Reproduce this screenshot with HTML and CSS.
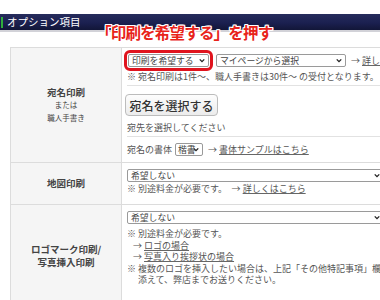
FILE: index.html
```html
<!DOCTYPE html>
<html lang="ja">
<head>
<meta charset="utf-8">
<link rel="stylesheet" href="styles.css">
</head>
<body>
<div class="page">
  <div class="hdr"><span class="mark"></span><span class="ttl">オプション項目</span></div>
  <div class="callout">「印刷を希望する」を押す</div>
  <div class="tbl">
    <div class="lbl row1"><b>宛名印刷</b><small>または</small><small>職人手書き</small></div>
    <div class="cell row1">
      <div class="sec s1">
        <div class="line">
          <span class="sel hl w1">印刷を希望する<svg viewBox="0 0 8 6" class="chev"><path d="M1 1.5 L4 4.5 L7 1.5" /></svg></span>
          <span class="sel w2">マイページから選択<svg viewBox="0 0 8 6" class="chev"><path d="M1 1.5 L4 4.5 L7 1.5" /></svg></span>
          <span class="arr">→ <u>詳しくはこちら</u></span>
        </div>
        <p class="txt t1">※ 宛名印刷は1件〜、職人手書きは30件〜 の受付となります。</p>
      </div>
      <div class="sec s2">
        <button class="btn">宛名を選択する</button>
        <p class="txt t2">宛先を選択してください</p>
      </div>
      <div class="sec s3 line">
        <span class="txt">宛名の書体</span>
        <span class="sel w3">楷書<svg viewBox="0 0 8 6" class="chev"><path d="M1 1.5 L4 4.5 L7 1.5" /></svg></span>
        <span class="arr">→ <u>書体サンプルはこちら</u></span>
      </div>
    </div>

    <div class="lbl row2"><b>地図印刷</b></div>
    <div class="cell row2 pad">
      <span class="sel wide">希望しない<svg viewBox="0 0 8 6" class="chev"><path d="M1 1.5 L4 4.5 L7 1.5" /></svg></span>
      <p class="txt lh12">※ 別途料金が必要です。　→ <u>詳しくはこちら</u></p>
    </div>

    <div class="lbl row3"><b>ロゴマーク印刷/</b><b>写真挿入印刷</b></div>
    <div class="cell row3 pad">
      <span class="sel wide">希望しない<svg viewBox="0 0 8 6" class="chev"><path d="M1 1.5 L4 4.5 L7 1.5" /></svg></span>
      <div class="notes">
        <p class="txt">※ 別途料金が必要です。</p>
        <p class="txt ind">→ <u>ロゴの場合</u></p>
        <p class="txt ind">→ <u>写真入り挨拶状の場合</u></p>
        <p class="txt hang">※ 複数のロゴを挿入したい場合は、上記「その他特記事項」欄に<br>添えて、弊店までお送りください。</p>
      </div>
    </div>
  </div>
</div>
</body>
</html>
```
FILE: styles.css
```css
html, body {
  margin: 0;
  padding: 0;
  background: #fff;
  overflow: hidden;
}
body {
  font-family: "Noto Sans CJK JP", "Noto Sans", sans-serif;
  color: #555;
}
.page {
  position: relative;
  width: 380px;
  height: 300px;
  padding-top: 14px;
  box-sizing: border-box;
  overflow: hidden;
}
.hdr {
  height: 16px;
  display: flex;
  align-items: center;
  gap: 4px;
  background: linear-gradient(#262c5c, #1b2050 55%, #121638);
  border-bottom: 2px solid #d2d2d8;
}
.mark {
  width: 2px;
  height: 11px;
  margin-left: 1px;
  background: #2fae3c;
}
.ttl {
  color: #fff;
  font-size: 10.5px;
  line-height: 1;
}
.callout {
  position: absolute;
  left: 96px;
  top: 22px;
  font-size: 15.5px;
  font-weight: 700;
  letter-spacing: -0.8px;
  line-height: 20px;
  color: #e8231a;
  text-shadow: 1px 0 0 #fff, -1px 0 0 #fff, 0 1px 0 #fff, 0 -1px 0 #fff,
    1px 1px 0 #fff, -1px -1px 0 #fff, 1px -1px 0 #fff, -1px 1px 0 #fff;
  z-index: 2;
}
.tbl {
  margin: 15px 0 0 10px;
  width: 400px;
  display: grid;
  grid-template-columns: 111px 1fr;
  grid-template-rows: auto auto 1fr;
  border-top: 1px solid #dcdcdc;
  border-left: 1px solid #dcdcdc;
  height: 260px;
}
.lbl {
  background: #f5f5f5;
  border-right: 1px solid #dcdcdc;
  border-bottom: 1px solid #dcdcdc;
  display: flex;
  flex-direction: column;
  align-items: center;
  justify-content: center;
  color: #444;
}
.lbl b {
  font-size: 9.5px;
  font-weight: 700;
  line-height: 13px;
}
.lbl small {
  font-size: 7.5px;
  line-height: 13px;
}
.row1.lbl b { line-height: 12px; }
.cell {
  border-bottom: 1px solid #dcdcdc;
  padding-left: 5px;
  font-size: 9px;
}
.pad {
  padding-top: 6px;
}
.row2.cell { padding-bottom: 9px; }
p { margin: 0; }
.txt {
  font-size: 9px;
  line-height: 10px;
  color: #555;
  white-space: nowrap;
}
u { text-decoration-color: #666; }
.line {
  display: flex;
  align-items: center;
  gap: 3px;
}
.sec {
  border-bottom: 1px solid #e2e2e2;
}
.s1 { padding: 6px 0 3px; }
.s2 { padding: 8px 0 3px; }
.s3 { border-bottom: none; height: 25px; box-sizing: border-box; }
.t1 { margin-top: 5px; }
.t2 { margin-top: 7px; }
.sel {
  position: relative;
  display: inline-flex;
  align-items: center;
  height: 13px;
  box-sizing: border-box;
  border: 1px solid #9a9a9a;
  border-radius: 2px;
  padding: 0 3px;
  font-size: 8.8px;
  color: #444;
  background: #fff;
  white-space: nowrap;
}
.chev {
  position: absolute;
  right: 3px;
  top: 3px;
  width: 6px;
  height: 5px;
  fill: none;
  stroke: #222;
  stroke-width: 1.8;
}
.hl {
  outline: 3px solid #e0141e;
  outline-offset: 1px;
  margin-left: 1px;
}
.w1 { width: 81px; }
.w2 { width: 130px; margin-left: 4px; }
.w3 { width: 28px; padding: 0 2px; }
.arr {
  font-size: 9px;
  color: #555;
  margin-left: 2px;
  white-space: nowrap;
}
.btn {
  display: block;
  margin-left: -2px;
  width: 93px;
  height: 22px;
  padding: 0;
  border: 1px solid #bcbcbc;
  border-radius: 4px;
  background: linear-gradient(#fdfdfd, #ececec);
  font-family: inherit;
  font-size: 12px;
  font-weight: 500;
  color: #333;
}
.wide {
  width: 257px;
  display: flex;
}
.lh12 {
  line-height: 12px;
  margin-top: 1px;
}
.notes { margin-top: 4px; }
.notes .txt { line-height: 11.5px; }
.ind { padding-left: 6px; }
.hang {
  margin-top: 0;
  padding-left: 11px;
  text-indent: -11px;
}
```
